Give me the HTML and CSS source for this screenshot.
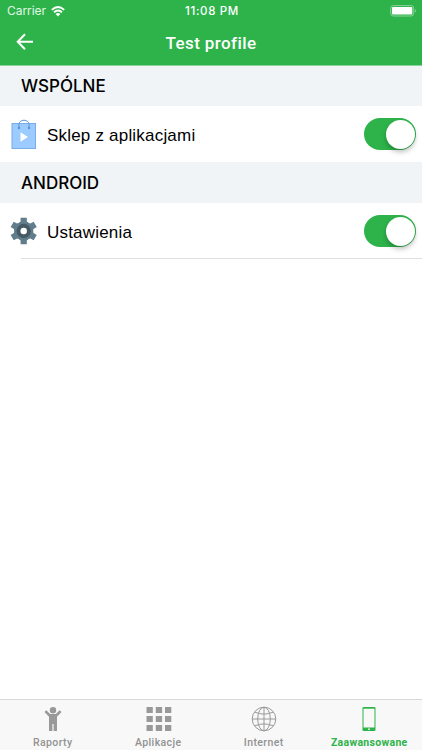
FILE: index.html
```html
<!DOCTYPE html>
<html lang="pl">
<head>
<meta charset="utf-8">
<title>Test profile</title>
<link rel="stylesheet" href="styles.css">
</head>
<body>
<header class="header">
  <div class="status">
    <div class="status-left"><span class="carrier">Carrier</span>
      <svg class="wifi" width="14" height="11" viewBox="0 0 14 11" fill="none" stroke="#fff" stroke-width="1.9"><path d="M.8 3.9Q7-1.7 13.2 3.9M3 6.3Q7 2.6 11 6.3"/><path d="M4.6 8Q7 5.9 9.4 8L7 10.4Z" fill="#fff" stroke="none"/></svg>
    </div>
    <span class="clock">11:08 PM</span>
    <svg class="battery" width="27" height="12" viewBox="0 0 27 12"><rect x=".7" y=".6" width="23" height="10.4" rx="2.6" fill="none" stroke="#8bd39b"/><rect x="2" y="2" width="20.3" height="7.6" rx="1" fill="#fff"/><path d="M25 4Q27 5.8 25 7.6Z" fill="#8bd39b"/></svg>
  </div>
  <div class="navbar">
    <svg class="back" width="18" height="18" viewBox="0 0 18 18" fill="none" stroke="#fff" stroke-width="2"><path d="M9 1.3L1.7 8.8L9 16.3M2 8.8H17"/></svg>
    <h1 class="title">Test profile</h1>
  </div>
</header>
<main class="content">
  <h2 class="section">WSPÓLNE</h2>
  <div class="row">
    <svg class="row-icon" width="28" height="32" viewBox="0 0 28 32"><rect x="2" y="5.5" width="23.5" height="25" fill="#9bcbff" stroke="#79aeea"/><path d="M9 10V6.5C9 .8 19 .8 19 6.5V10" fill="none" stroke="#5793df"/><circle cx="9" cy="10" r="1.2" fill="#5793df"/><circle cx="19" cy="10" r="1.2" fill="#5793df"/><path d="M10.5 14.2L18 19L10.5 23.8Z" fill="#fff"/></svg>
    <span class="label">Sklep z aplikacjami</span>
    <span class="switch"><span class="knob"></span></span>
  </div>
  <h2 class="section section-tall">ANDROID</h2>
  <div class="row">
    <svg class="row-icon" width="28" height="32" viewBox="0 0 28 32"><g transform="translate(13.7 16)"><g fill="#607d8b"><circle r="9.7"/><path id="tooth" d="M-4.4-8L-3.1-9.5V-13.3H3.1V-9.5L4.4-8V8L3.1 9.5V13.3H-3.1V9.5L-4.4 8Z"/><use href="#tooth" transform="rotate(60)"/><use href="#tooth" transform="rotate(120)"/></g><circle r="5.2" fill="#607d8b" stroke="#455a64" stroke-width="4"/><circle r="3.2" fill="#fff"/></g></svg>
    <span class="label">Ustawienia</span>
    <span class="switch"><span class="knob"></span></span>
  </div>
  <div class="divider"></div>
</main>
<nav class="tabs">
  <div class="tab">
    <svg width="26" height="26" viewBox="0 0 26 26" fill="#999"><circle cx="13" cy="4.2" r="3.2"/><path d="M4.5 6L6.3 4.3L10.2 8H15.8L19.7 4.3L21.5 6L17 10.8V25H13.6V18H12.4V25H9V10.8Z"/></svg>
    <span class="tab-label">Raporty</span>
  </div>
  <div class="tab">
    <svg class="grid-icon" width="26" height="26" viewBox="0 0 26 26" fill="#999"><path d="M.5 1h6.3v6H.5zM9.8 1h6.3v6H9.8zM19 1h6.3v6H19zM.5 10h6.3v6H.5zM9.8 10h6.3v6H9.8zM19 10h6.3v6H19zM.5 19h6.3v6H.5zM9.8 19h6.3v6H9.8zM19 19h6.3v6H19z"/></svg>
    <span class="tab-label">Aplikacje</span>
  </div>
  <div class="tab">
    <svg width="26" height="26" viewBox="0 0 26 26" fill="none" stroke="#999"><circle cx="13" cy="13" r="11.8"/><ellipse cx="13" cy="13" rx="6.3" ry="11.8"/><path d="M13 1.2V24.8M1.2 13H24.8M4 6.2Q13 10 22 6.2M4 19.8Q13 16 22 19.8"/></svg>
    <span class="tab-label">Internet</span>
  </div>
  <div class="tab active">
    <svg width="26" height="26" viewBox="0 0 26 26"><rect x="6.5" y="1" width="13" height="24" rx="1.2" fill="#2db34a"/><rect x="7.5" y="2.7" width="11" height="18.8" fill="#f8f8f8"/><circle cx="13" cy="23.2" r=".9" fill="#f8f8f8"/></svg>
    <span class="tab-label advanced">Zaawansowane</span>
  </div>
</nav>
</body>
</html>
```
FILE: styles.css
```css
* { box-sizing: border-box; }
body {
  margin: 0;
  width: 422px;
  height: 750px;
  display: flex;
  flex-direction: column;
  overflow: hidden;
  background: #fff;
  color: #000;
  font-family: Roboto, "Liberation Sans", sans-serif;
}
svg { display: block; flex: none; }
.header { height: 66px; background: #2db34a; color: #fff; border-bottom: 1px solid #8cd49b; }
.status { height: 22px; display: grid; grid-template-columns: 1fr auto 1fr; align-items: center; padding: 0 5px 0 7px; font: 12px/22px Inter, sans-serif; }
.status-left { display: flex; align-items: center; gap: 6px; }
.carrier { width: 38px; white-space: nowrap; color: #e3f7e7; letter-spacing: -.05px; }
.clock { font-weight: 500; font-size: 11.5px; letter-spacing: .65px; }
.battery { justify-self: end; margin-bottom: 1px; }
.navbar { height: 43px; display: grid; grid-template-columns: 1fr auto 1fr; align-items: center; padding: 0 16px; }
.title { margin: 0; font-size: 17px; line-height: 43px; font-weight: 500; letter-spacing: .4px; }
.back { margin-bottom: 3px; }
.section { margin: 0; height: 40px; padding-left: 21px; background: #f0f4f6; font: 500 17px/41px Inter, sans-serif; }
.section-tall { height: 41px; line-height: 43px; }
.row { height: 56px; display: flex; align-items: center; padding: 0 6px 0 10px; }
.row-icon { margin-bottom: 1px; }
.label { flex: 1; margin-left: 9px; padding-top: 3px; font: 17px/24px "Liberation Sans", sans-serif; letter-spacing: .2px; }
.switch { width: 52px; height: 32px; padding: 1.5px; border-radius: 16px; background: #2db34a; display: flex; justify-content: flex-end; }
.knob { width: 29px; height: 29px; border-radius: 50%; background: #fff; box-shadow: 0 3px 5px rgba(0,0,0,.25); }
.divider { height: 1px; margin: -1px 0 0 21px; background: #dedfe1; }
.content { flex: 1; }
.tabs { height: 51px; border-top: 1px solid #d8d8d8; background: #f8f8f8; display: grid; grid-template-columns: repeat(4, 1fr); }
.tab { display: flex; flex-direction: column; align-items: center; padding-top: 6px; color: #929292; }
.grid-icon { margin-left: 1px; }
.tab-label { font-size: 10.5px; line-height: 12px; margin-top: 5px; font-weight: 500; letter-spacing: .4px; }
.active { color: #2db34a; }
.advanced { font-weight: 700; letter-spacing: .3px; }
```
